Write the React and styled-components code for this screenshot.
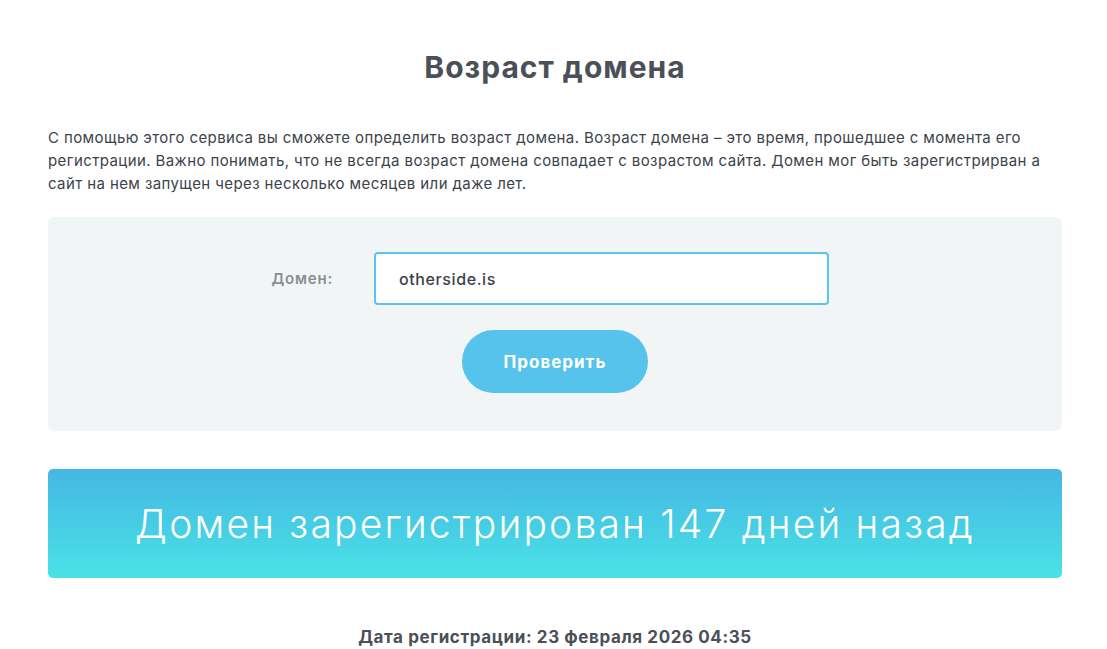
import styled, { createGlobalStyle } from 'styled-components'

const GlobalStyle = createGlobalStyle`
  body {
    margin: 0;
    background: #ffffff;
    font-family: Inter, "Open Sans", sans-serif;
    color: #3c4149;
  }
`

const Page = styled.main`
  width: 1014px;
  margin: 0 0 0 48px;
  padding: 47px 0 0;
`

const Title = styled.h1`
  margin: 0 0 39px;
  text-align: center;
  font-size: 30px;
  line-height: 40px;
  font-weight: 700;
  letter-spacing: 1px;
  color: #4b5058;
`

const Intro = styled.p`
  margin: 0 0 22px;
  font-size: 15px;
  line-height: 23px;
  letter-spacing: 0.4px;
  color: #3d424a;
`

const FormBox = styled.form`
  display: flex;
  flex-direction: column;
  align-items: center;
  gap: 25px;
  padding: 35px 0 38px;
  background: #f2f5f6;
  border-radius: 6px;
`

const Row = styled.div`
  align-self: stretch;
  display: grid;
  grid-template-columns: 285px 455px;
  column-gap: 41px;
  align-items: center;
`

const Label = styled.label`
  text-align: right;
  font-size: 15px;
  font-weight: 600;
  letter-spacing: 0.8px;
  color: #8a8e92;
`

const Input = styled.input`
  box-sizing: border-box;
  height: 53px;
  padding: 0 23px;
  border: 2px solid #5bc4ec;
  border-radius: 4px;
  background: #fff;
  font-family: inherit;
  font-size: 16px;
  font-weight: 500;
  letter-spacing: 0.6px;
  color: #3c4149;
  outline: none;
`

const Button = styled.button`
  width: 186px;
  height: 63px;
  border: 0;
  border-radius: 32px;
  background: #56c3ec;
  color: #fff;
  font-family: inherit;
  font-size: 17px;
  font-weight: 700;
  letter-spacing: 1px;
  cursor: pointer;
`

const Result = styled.div`
  margin-top: 38px;
  height: 109px;
  display: flex;
  align-items: center;
  justify-content: center;
  border-radius: 5px;
  background: linear-gradient(180deg, #45b7e3 0%, #49e2e6 100%);
  color: #fff;
  font-size: 39px;
  font-weight: 300;
  letter-spacing: 2.2px;
`

const RegDate = styled.p`
  margin: 49px 0 0;
  text-align: center;
  font-size: 17px;
  font-weight: 700;
  letter-spacing: 0.6px;
  color: #4b5058;
`

export default function App() {
  return (
    <Page>
      <GlobalStyle />
      <Title>Возраст домена</Title>
      <Intro>
        С помощью этого сервиса вы сможете определить возраст домена. Возраст домена – это время, прошедшее с момента его
        регистрации. Важно понимать, что не всегда возраст домена совпадает с возрастом сайта. Домен мог быть зарегистрирван а
        сайт на нем запущен через несколько месяцев или даже лет.
      </Intro>
      <FormBox onSubmit={e => e.preventDefault()}>
        <Row>
          <Label htmlFor="domain">Домен:</Label>
          <Input id="domain" defaultValue="otherside.is" />
        </Row>
        <Button type="submit">Проверить</Button>
      </FormBox>
      <Result>Домен зарегистрирован 147 дней назад</Result>
      <RegDate>Дата регистрации: 23 февраля 2026 04:35</RegDate>
    </Page>
  )
}
